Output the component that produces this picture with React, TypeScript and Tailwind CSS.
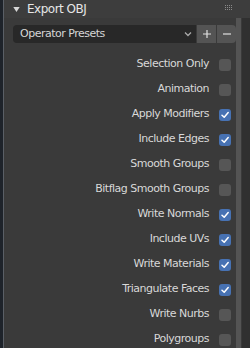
import React from "react";

const rows: [string, boolean][] = [
  ["Selection Only", false],
  ["Animation", false],
  ["Apply Modifiers", true],
  ["Include Edges", true],
  ["Smooth Groups", false],
  ["Bitflag Smooth Groups", false],
  ["Write Normals", true],
  ["Include UVs", true],
  ["Write Materials", true],
  ["Triangulate Faces", true],
  ["Write Nurbs", false],
  ["Polygroups", false],
];

function Check({ on }: { on: boolean }) {
  return on ? (
    <div className="w-[12px] h-[12px] rounded-[3px] bg-[#4772b3] flex items-center justify-center">
      <svg width="10" height="10" viewBox="0 0 10 10">
        <path d="M2 5.2 L4.2 7.3 L8.2 2.6" stroke="#ffffff" strokeWidth="1.5" fill="none" strokeLinecap="round" strokeLinejoin="round" />
      </svg>
    </div>
  ) : (
    <div className="w-[12px] h-[12px] rounded-[3px] bg-[#565656]" />
  );
}

export default function App() {
  return (
    <div
      className="w-[250px] h-[348px] flex bg-[#3a3a3a] overflow-hidden tracking-[-0.5px]"
      style={{ fontFamily: '"DejaVu Sans", sans-serif' }}
    >
      <div className="w-[3px] bg-[#1e232a]" />
      <div className="w-[1px] bg-[#5a5f66]" />
      <div className="flex-1 flex flex-col">
        <div className="h-[22px] flex items-center bg-[#3d3d3d] relative">
          <svg width="7" height="7" viewBox="0 0 7 7" className="ml-[9px]">
            <path d="M0.3 1 L6.7 1 L3.5 6 Z" fill="#d8d8d8" />
          </svg>
          <span className="ml-[7px] text-[12px] text-[#e6e6e6]">Export OBJ</span>
          <div className="absolute left-[221px] top-[5px] grid grid-cols-4 gap-x-[1px] gap-y-[1px]">
            {Array.from({ length: 12 }).map((_, i) => (
              <div key={i} className="w-[1px] h-[1px] bg-[#8a8a8a]" />
            ))}
          </div>
        </div>
        <div className="flex flex-1">
          <div className="flex-1 flex flex-col">
            <div className="flex items-center mt-[7px] ml-[9px] h-[18px]">
              <div className="flex-1 h-[18px] rounded-l-[4px] bg-[#282828] flex items-center pl-[7px] pr-[4px] text-[11px] text-[#d6d6d6]">
                <span className="flex-1">Operator Presets</span>
                <svg width="8" height="6" viewBox="0 0 8 6">
                  <path d="M1 1.5 L4 4.5 L7 1.5" stroke="#aaaaaa" strokeWidth="1.3" fill="none" />
                </svg>
              </div>
              <div className="w-[19px] h-[18px] ml-[1px] bg-[#545454] flex items-center justify-center">
                <svg width="10" height="10" viewBox="0 0 10 10">
                  <path d="M5 1 V9 M1 5 H9" stroke="#e0e0e0" strokeWidth="1.2" />
                </svg>
              </div>
              <div className="w-[19px] h-[18px] ml-[1px] rounded-r-[4px] bg-[#545454] flex items-center justify-center">
                <svg width="10" height="10" viewBox="0 0 10 10">
                  <path d="M1 5 H9" stroke="#e0e0e0" strokeWidth="1.2" />
                </svg>
              </div>
            </div>
            <div className="flex flex-col mt-[9px]">
              {rows.map(([label, on]) => (
                <div key={label} className="h-[25px] flex items-center justify-end pr-[5px]">
                  <span className="text-[11px] text-[#d8d8d8] mr-[10px]">{label}</span>
                  <Check on={on} />
                </div>
              ))}
            </div>
          </div>
          <div className="w-[5px] mr-[1px] bg-[#545454] mt-[-14px]" />
          <div className="w-[8px] bg-[#303030]" />
        </div>
      </div>
    </div>
  );
}
